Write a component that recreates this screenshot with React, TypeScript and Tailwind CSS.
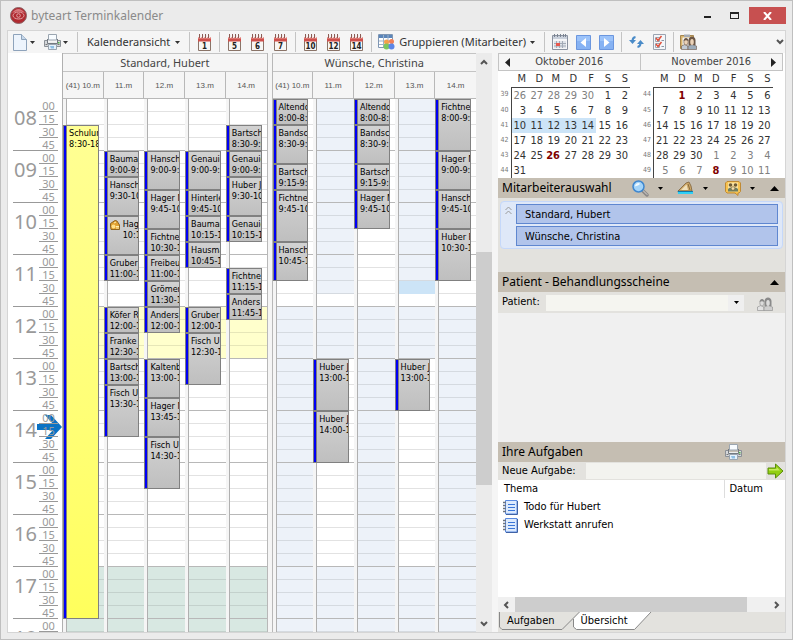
import React from 'react';

const UI = "font-['Noto_Sans','Open_Sans',sans-serif]";
const SMALL = "font-['DejaVu_Sans_Condensed','DejaVu_Sans',sans-serif]";

type Appointment = { name: string; time: string; from: number; to: number; tone?: 'yellow'; cash?: boolean };
type Shade = { from: number; to: number; className: string };
type Day = { label: string; shades: Shade[]; items: Appointment[] };

const SLOTS = 41;
const slot = (hour: number) => Math.round((hour - 8) * 4) + 1;

const hubert: Shade[] = [
  { from: 12, to: 13, className: 'bg-[#ffffcc] border-[#e6e6b8]' },
  { from: 17, to: 19, className: 'bg-[#d8e8e2] border-[#c3d1cc]' },
];
const BLUE = 'bg-[#edf2f9] border-[#d5dae0]';
const afternoonOff: Shade[] = [{ from: 12, to: 19, className: BLUE }];
const morningOff: Shade[] = [
  { from: 8, to: 11.75, className: BLUE },
  { from: 12, to: 13, className: BLUE },
  { from: 17, to: 19, className: BLUE },
];

const groups: { name: string; days: Day[] }[] = [
  {
    name: 'Standard, Hubert',
    days: [
      {
        label: '(41) 10.m',
        shades: hubert,
        items: [{ name: 'Schulung', time: '8:30-18:00', from: 8.5, to: 18, tone: 'yellow' }],
      },
      {
        label: '11.m',
        shades: hubert,
        items: [
          { name: 'Baumann', time: '9:00-9:30', from: 9, to: 9.5 },
          { name: 'Hansch', time: '9:30-10:15', from: 9.5, to: 10.25 },
          { name: 'Hager', time: '10:15-11:00', from: 10.25, to: 11, cash: true },
          { name: 'Gruber', time: '11:00-11:30', from: 11, to: 11.5 },
          { name: 'Köfer R', time: '12:00-12:30', from: 12, to: 12.5 },
          { name: 'Franke', time: '12:30-13:00', from: 12.5, to: 13 },
          { name: 'Bartsch', time: '13:00-13:30', from: 13, to: 13.5 },
          { name: 'Fisch U', time: '13:30-14:30', from: 13.5, to: 14.5 },
        ],
      },
      {
        label: '12.m',
        shades: hubert,
        items: [
          { name: 'Hansch', time: '9:00-9:45', from: 9, to: 9.75 },
          { name: 'Hager M', time: '9:45-10:30', from: 9.75, to: 10.5 },
          { name: 'Fichtner', time: '10:30-11:00', from: 10.5, to: 11 },
          { name: 'Freibeuter', time: '11:00-11:30', from: 11, to: 11.5 },
          { name: 'Grömer', time: '11:30-12:00', from: 11.5, to: 12 },
          { name: 'Anders', time: '12:00-12:30', from: 12, to: 12.5 },
          { name: 'Kaltenb', time: '13:00-13:45', from: 13, to: 13.75 },
          { name: 'Hager M', time: '13:45-14:30', from: 13.75, to: 14.5 },
          { name: 'Fisch U', time: '14:30-15:30', from: 14.5, to: 15.5 },
        ],
      },
      {
        label: '13.m',
        shades: hubert,
        items: [
          { name: 'Genauig', time: '9:00-9:45', from: 9, to: 9.75 },
          { name: 'Hinterle', time: '9:45-10:15', from: 9.75, to: 10.25 },
          { name: 'Baumann', time: '10:15-10:45', from: 10.25, to: 10.75 },
          { name: 'Hausmann', time: '10:45-11:15', from: 10.75, to: 11.25 },
          { name: 'Gruber', time: '12:00-12:30', from: 12, to: 12.5 },
          { name: 'Fisch U', time: '12:30-13:30', from: 12.5, to: 13.5 },
        ],
      },
      {
        label: '14.m',
        shades: hubert,
        items: [
          { name: 'Bartsch', time: '8:30-9:00', from: 8.5, to: 9 },
          { name: 'Genauig', time: '9:00-9:30', from: 9, to: 9.5 },
          { name: 'Huber J', time: '9:30-10:15', from: 9.5, to: 10.25 },
          { name: 'Genauig', time: '10:15-10:45', from: 10.25, to: 10.75 },
          { name: 'Fichtner', time: '11:15-11:45', from: 11.25, to: 11.75 },
          { name: 'Anders', time: '11:45-12:15', from: 11.75, to: 12.25 },
        ],
      },
    ],
  },
  {
    name: 'Wünsche, Christina',
    days: [
      {
        label: '(41) 10.m',
        shades: afternoonOff,
        items: [
          { name: 'Altendorf', time: '8:00-8:30', from: 8, to: 8.5 },
          { name: 'Bandsch', time: '8:30-9:15', from: 8.5, to: 9.25 },
          { name: 'Bartsch', time: '9:15-9:45', from: 9.25, to: 9.75 },
          { name: 'Fichtner', time: '9:45-10:45', from: 9.75, to: 10.75 },
          { name: 'Hansch', time: '10:45-11:30', from: 10.75, to: 11.5 },
        ],
      },
      {
        label: '11.m',
        shades: morningOff,
        items: [
          { name: 'Huber J', time: '13:00-14:00', from: 13, to: 14 },
          { name: 'Huber J', time: '14:00-15:00', from: 14, to: 15 },
        ],
      },
      {
        label: '12.m',
        shades: afternoonOff,
        items: [
          { name: 'Altendorf', time: '8:00-8:30', from: 8, to: 8.5 },
          { name: 'Bandsch', time: '8:30-9:15', from: 8.5, to: 9.25 },
          { name: 'Bartsch', time: '9:15-9:45', from: 9.25, to: 9.75 },
          { name: 'Hager M', time: '9:45-10:30', from: 9.75, to: 10.5 },
        ],
      },
      {
        label: '13.m',
        shades: [{ from: 11.5, to: 11.75, className: 'bg-[#cce4f7] border-[#cce4f7]' }, ...morningOff],
        items: [{ name: 'Huber J', time: '13:00-14:00', from: 13, to: 14 }],
      },
      {
        label: '14.m',
        shades: afternoonOff,
        items: [
          { name: 'Fichtner', time: '8:00-9:00', from: 8, to: 9 },
          { name: 'Hager M', time: '9:00-9:45', from: 9, to: 9.75 },
          { name: 'Hansch', time: '9:45-10:30', from: 9.75, to: 10.5 },
          { name: 'Huber E', time: '10:30-11:30', from: 10.5, to: 11.5 },
        ],
      },
    ],
  },
];

/* ---------- icons ---------- */

function Logo() {
  return (
    <svg width="17" height="17" viewBox="0 0 17 17">
      <circle cx="8.5" cy="8.5" r="8" fill="#b02a30" stroke="#8d6668" />
      <path d="M2 6Q8.5 -2 15 6Q8.5 2.500 2 6Z" fill="#d9777b" />
      <ellipse cx="8.5" cy="8.5" rx="5.5" ry="3.5" fill="none" stroke="#e3a5a7" />
      <circle cx="8.5" cy="8.5" r="1.8" fill="none" stroke="#e3a5a7" />
    </svg>
  );
}

function PageIcon() {
  return (
    <svg width="14" height="17" viewBox="0 0 14 17">
      <path d="M.5 .5H8.5L13.5 5.5V16.5H.5Z" fill="#edf4fc" stroke="#8ea3bb" />
      <path d="M8.5 .5V5.5H13.5" fill="#c7d8ea" stroke="#8ea3bb" />
    </svg>
  );
}

function PrinterIcon() {
  return (
    <svg width="17" height="16" viewBox="0 0 17 16">
      <path d="M4.5 .5H12.5V6H4.5Z" fill="#f8fcff" stroke="#9aa5b0" />
      <path d="M.5 6.5H3.500V8.500H13.500V6.500H16.500V12.500H.5Z" fill="#d5d8db" stroke="#8b9096" />
      <path d="M3.5 5V9.500H13.500V5" fill="none" stroke="#747a81" />
      <path d="M4 8H13V9H4Z" fill="#eceeef" />
      <path d="M4.5 10.5H12.5V15.5H4.5Z" fill="#e4f1fb" stroke="#9aa5b0" />
      <path d="M6 12H10V14.500H7Z" fill="#8fc0e6" />
      <path d="M14 8H15.500V9.500H14Z" fill="#52b848" />
      <path d="M1.500 10.500H3.500M13.500 10.500H15.500" stroke="#777" />
    </svg>
  );
}

function DayIcon({ n }: { n: string }) {
  return (
    <svg width="15" height="17" viewBox="0 0 15 17">
      <path d="M1.5 3.5H13.5V16.5H1.5Z" fill="#f8f6f4" stroke="#8a7468" />
      <path d="M1 3H14V7.500H1Z" fill="#cf4f4b" />
      <path d="M1 3H14V4.500H1Z" fill="#eaa19b" />
      <path d="M2.500 0V4M5.500 0V4M8.500 0V4M11.500 0V4" stroke="#8b5b55" />
      <path d="M3.500 1V4M6.500 1V4M9.500 1V4M12.500 1V4" stroke="#f5e9e7" />
      <text
        x="7.5"
        y="15"
        textAnchor="middle"
        fill="#222"
        className="font-['DejaVu_Sans_Condensed','DejaVu_Sans',sans-serif] text-[8px] font-bold"
      >
        {n}
      </text>
    </svg>
  );
}

function GroupIcon() {
  return (
    <svg width="17" height="16" viewBox="0 0 17 16">
      <path d="M.5 .5H14.5V13.5H.5Z" fill="#fff" stroke="#7f96b3" />
      <path d="M1 1H14V4H1Z" fill="#5c86ba" />
      <path d="M1 7H14M1 10.5H14M5.5 1V13M10 1V13" stroke="#9db2ca" />
      <circle cx="8.5" cy="8" r="2.5" fill="#f4a04a" />
      <circle cx="13.5" cy="7.5" r="2.5" fill="#f08058" />
      <circle cx="8.5" cy="12.500" r="3" fill="#7cc75e" />
      <circle cx="13.5" cy="12.500" r="3" fill="#5c86e6" />
    </svg>
  );
}

function MonthIcon() {
  return (
    <svg width="16" height="16" viewBox="0 0 16 16">
      <path d="M.5 1.5H15.500V15.5H.5Z" fill="#f5f6f8" stroke="#8a92a0" />
      <path d="M1 2H15V5H1Z" fill="#c9d0db" />
      <path d="M2.5 0V3M5.500 0V3M8.500 0V3M11.500 0V3M13.500 0V3" stroke="#7a8390" />
      <path d="M2 7H14V14H2Z" fill="#dfe3e9" />
      <path d="M2 9.500H14M2 12H14M4.500 7V14M7.500 7V14M10.500 7V14" stroke="#a3abb7" />
      <path d="M4 9H8V12H4Z" fill="#e8584e" />
    </svg>
  );
}

function StepIcon({ dir }: { dir: 'left' | 'right' }) {
  return (
    <svg width="15" height="15" viewBox="0 0 15 15">
      <path d="M.5 .5H14.5V14.5H.5Z" fill="#86b2f3" stroke="#6b96de" />
      <path d="M1 1H14V6H1Z" fill="#9cc3fa" />
      <path d={dir === 'left' ? 'M10 3V12L4.500 7.500Z' : 'M5 3V12L10.500 7.500Z'} fill="#fff" />
    </svg>
  );
}

function RefreshIcon() {
  return (
    <svg width="15" height="14" viewBox="0 0 15 14" fill="none" stroke="#4a8bc8" strokeWidth="2">
      <path d="M6.5 2Q3.500 2.500 3.500 6" />
      <path d="M0 5H7L3.5 9Z" fill="#4a8bc8" stroke="none" />
      <path d="M8.500 12Q11.500 11.500 11.500 8" />
      <path d="M8 9H15L11.5 5Z" fill="#4a8bc8" stroke="none" />
    </svg>
  );
}

function ChecklistIcon() {
  return (
    <svg width="13" height="16" viewBox="0 0 13 16">
      <path d="M.5 .5H12.5V15.5H.5Z" fill="#f4f6f9" stroke="#9ba4b1" />
      <path d="M2.5 3.5H6.5V7.5H2.5ZM2.5 9.5H6.5V13.5H2.5Z" fill="#fff" stroke="#9aa7b5" />
      <path d="M3 4L5 6.500L8.500 2M3 10L5 12.500L8.500 8" fill="none" stroke="#e0503c" strokeWidth="1.500" />
      <path d="M8.500 6.500H11M8.500 12.500H11" stroke="#8b95a3" />
    </svg>
  );
}

function PatientIcon({ muted = false }: { muted?: boolean }) {
  const hair = muted ? '#8a8a8a' : '#6b5646';
  const skin = muted ? '#dcdcdc' : '#ecd3b8';
  return (
    <svg width="17" height="16" viewBox="0 0 17 16">
      {!muted && (
        <>
          <path d="M.5 1.500H13.500V14.500H.5Z" fill="#d9b56e" stroke="#a58650" />
          <path d="M2.500 3.500H11.500V13H2.500Z" fill="#f2f5f8" />
          <path d="M4 .5H10V3H4Z" fill="#a5abb3" />
        </>
      )}
      <path d="M1.500 15.500V12Q5 9 8 12V15.500Z" fill={muted ? '#e2e2e2' : '#c2cad4'} stroke={hair} strokeWidth=".6" />
      <path d="M8 15.500V12Q12 9 16.500 12V15.500Z" fill={muted ? '#cfcfcf' : '#9dacba'} stroke={hair} strokeWidth=".6" />
      <path d="M8.500 11V6Q9 2.500 12 2.500T15.500 6V11Z" fill={hair} />
      <ellipse cx="12" cy="8" rx="1.800" ry="3" fill={skin} />
      <ellipse cx="6" cy="8" rx="2.200" ry="3" fill={skin} stroke={hair} strokeWidth=".6" />
      <path d="M3.500 7Q4 4 6 4T8.500 7Q6 5.500 3.500 7Z" fill={hair} />
    </svg>
  );
}

function SearchIcon() {
  return (
    <svg width="17" height="17" viewBox="0 0 17 17">
      <path d="M10.5 10.500L15 15" stroke="#8d8a88" strokeWidth="3.500" strokeLinecap="round" />
      <path d="M10.500 10L15 14.500" stroke="#d8d6d4" strokeLinecap="round" />
      <circle cx="6.5" cy="6.5" r="5.500" fill="#a3d4fa" stroke="#3f87cf" strokeWidth="1.500" />
      <path d="M3 6.500Q3 3 7 3Q9 4 6 5.500Q4 6 3 6.500Z" fill="#f2faff" />
    </svg>
  );
}

function HatIcon() {
  return (
    <svg width="17" height="14" viewBox="0 0 17 14">
      <path d="M1 10L5 6L9 2L12 1L14 5L15 10Z" fill="#cda868" stroke="#7c6038" strokeWidth=".8" />
      <path d="M4 9L9.500 3.500L11 9Z" fill="#f0e0ba" />
      <path d="M11 3L13 9" stroke="#8a6b3c" />
      <path d="M.5 10H16L15.500 13H1.500Z" fill="#1176a8" />
      <path d="M1 12H16" stroke="#2fd0f5" strokeWidth="2" />
    </svg>
  );
}

function TeamIcon() {
  return (
    <svg width="16" height="15" viewBox="0 0 16 15">
      <path d="M2 .5H14L15.5 2V10.5L14 12H13V14.5L10 12H2L.5 10.5V2Z" fill="#f7c350" stroke="#c08a34" />
      <path d="M3 1.500H13V10.500H3Z" fill="#fae2a0" />
      <circle cx="5.5" cy="4" r="1.800" fill="#6e5a35" />
      <circle cx="10.5" cy="4" r="1.800" fill="#6e5a35" />
      <path d="M3 10.5V8Q5.500 5 8 8Q10.500 5 13 8V10.500Z" fill="#6e7f62" />
      <circle cx="8" cy="7.500" r="1.800" fill="#f3dfae" stroke="#6e5a35" strokeWidth=".6" />
    </svg>
  );
}

function CashIcon() {
  return (
    <svg width="10" height="10" viewBox="0 0 10 10" className="mt-px shrink-0">
      <path d="M.5 3.500L5 .5L7 1L9.500 5V9.500H1L.5 6Z" fill="#e0a030" stroke="#8d6420" />
      <circle cx="3.5" cy="6.500" r="2" fill="#ffe08a" />
      <path d="M6 6.500H9M6 8H9" stroke="#fff0b0" />
      <path d="M4 3L6 2" stroke="#fff0b0" />
    </svg>
  );
}

function NotebookIcon() {
  return (
    <svg width="15" height="15" viewBox="0 0 15 15">
      <path d="M2.5 .5H14V14H2.5Z" fill="#dceafd" stroke="#5a8ae0" />
      <path d="M14.500 1V14.500H3" fill="none" stroke="#3f62a5" />
      <path d="M5 4.5H12M5 7.5H12M5 10.5H12" stroke="#3a76d8" />
      <path d="M0 2.5H3M0 5.5H3M0 8.5H3M0 11.5H3" stroke="#6b7482" strokeWidth="1.500" />
    </svg>
  );
}

function GoIcon() {
  return (
    <svg width="17" height="16" viewBox="0 0 17 16">
      <path d="M1 5H8.5V1L16 8L8.5 15V11H1Z" fill="#93cf12" stroke="#5a8d0a" />
      <path d="M2 6H9.5V4L13 7.5H2Z" fill="#c5ec5c" />
    </svg>
  );
}

function Down({ className = 'text-[#333]' }: { className?: string }) {
  return (
    <svg width="5" height="3" viewBox="0 0 5 3" className={`shrink-0 ${className}`}>
      <path d="M0 0H5L2.5 3Z" fill="currentColor" />
    </svg>
  );
}

function Chevron({ d, width, height }: { d: string; width: number; height: number }) {
  return (
    <svg width={width} height={height} viewBox={`0 0 ${width} ${height}`} fill="none" stroke="#555" strokeWidth="2">
      <path d={d} />
    </svg>
  );
}

/* ---------- toolbar ---------- */

function Divider() {
  return <span className="h-5 w-px shrink-0 bg-[#c4c4c4]" />;
}

function Tool({ label, children, className = '' }: { label: string; children: React.ReactNode; className?: string }) {
  return (
    <button type="button" aria-label={label} className={`flex shrink-0 items-center ${className}`}>
      {children}
    </button>
  );
}

function Toolbar() {
  return (
    <div className="flex h-[22px] items-center bg-[#f5f5f5] pl-[5px] text-[11px] text-[#333]">
      <Tool label="Neu" className="gap-[3px]">
        <PageIcon />
        <Down />
      </Tool>
      <Tool label="Drucken" className="mx-[9px] gap-[2px]">
        <PrinterIcon />
        <Down />
      </Tool>
      <Divider />
      <button type="button" className="mx-[9px] flex shrink-0 items-center gap-[5px] whitespace-nowrap">
        Kalenderansicht <Down />
      </button>
      <Divider />
      <Tool label="Ein Tag" className="mx-[7px]"><DayIcon n="1" /></Tool>
      <Divider />
      <div className="mx-[7px] flex gap-2">
        <Tool label="5 Tage"><DayIcon n="5" /></Tool>
        <Tool label="6 Tage"><DayIcon n="6" /></Tool>
        <Tool label="7 Tage"><DayIcon n="7" /></Tool>
      </div>
      <Divider />
      <div className="mx-[7px] flex gap-2">
        <Tool label="10 Tage"><DayIcon n="10" /></Tool>
        <Tool label="12 Tage"><DayIcon n="12" /></Tool>
        <Tool label="14 Tage"><DayIcon n="14" /></Tool>
      </div>
      <Divider />
      <button type="button" className="ml-[6px] mr-[9px] flex shrink-0 items-center gap-1 whitespace-nowrap">
        <GroupIcon /> Gruppieren (Mitarbeiter) <Down />
      </button>
      <Divider />
      <div className="mx-[7px] flex gap-2">
        <Tool label="Heute"><MonthIcon /></Tool>
        <Tool label="Zurück"><StepIcon dir="left" /></Tool>
        <Tool label="Vor"><StepIcon dir="right" /></Tool>
      </div>
      <Divider />
      <div className="mx-[7px] flex gap-[9px]">
        <Tool label="Aktualisieren"><RefreshIcon /></Tool>
        <Tool label="Aufgabenliste"><ChecklistIcon /></Tool>
      </div>
      <Divider />
      <Tool label="Patient" className="ml-[6px]"><PatientIcon /></Tool>
      <Tool label="Mehr" className="ml-auto mr-px"><Chevron d="M1 1L4 4L7 1" width={8} height={6} /></Tool>
    </div>
  );
}

/* ---------- schedule ---------- */

function TimeScale() {
  const hours = Array.from({ length: 11 }, (_, i) => String(i + 8).padStart(2, '0'));
  return (
    <div className="relative w-[55px] shrink-0 border-r border-[#b0b0b0] pl-[5px] text-[#999]">
      {hours.map((h) => (
        <div key={h} className="mr-1 flex h-[52px] border-b border-[#999] last:border-0">
          <div className="w-[26px] pr-[2px] pt-[5px] text-right text-[20px] leading-[28px]">{h}</div>
          <div className="flex-1">
            {['00', '15', '30', '45'].map((m) => (
              <div
                key={m}
                className="h-[13px] border-b border-[#999] text-center text-[11px] leading-[14px] last:border-0"
              >
                {m}
              </div>
            ))}
          </div>
        </div>
      ))}
    </div>
  );
}

function Appt({ item }: { item: Appointment }) {
  const fill = item.tone === 'yellow' ? 'bg-linear-to-b from-[#ffff94] to-[#ffff5c]' : 'bg-linear-to-b from-[#d2d2d2] to-[#bfbfbf]';
  return (
    <div
      className="z-10 col-start-1 mr-[5px] flex min-w-0 overflow-hidden border border-[#808080]"
      style={{ gridRow: `${slot(item.from)} / ${slot(item.to)}` }}
    >
      <div className="w-[3px] shrink-0 border-r border-[#808080] bg-[#0000f5]" />
      <div className={`flex min-w-0 flex-1 gap-[3px] overflow-hidden pl-[2px] pt-[2px] text-[9px] leading-[11px] text-black ${SMALL} ${fill}`}>
        {item.cash && <CashIcon />}
        <div className="whitespace-nowrap">
          {item.name}
          <br />
          {item.time}
        </div>
      </div>
    </div>
  );
}

function DayColumn({ day }: { day: Day }) {
  return (
    <div className="grid min-w-0 auto-rows-[13px] grid-cols-[minmax(0,1fr)]">
      {Array.from({ length: SLOTS }, (_, i) => {
        const hour = 8 + i / 4;
        const shade = day.shades.find((s) => hour >= s.from && hour < s.to);
        const line = i % 4 === 3 ? 'border-b-[#b8b8b8]' : '';
        return (
          <div key={i} className="col-start-1 flex" style={{ gridRow: i + 1 }}>
            <div className="w-1 shrink-0 border-r border-[#b0b0b0] bg-[#f5f5f5]" />
            <div className={`flex-1 border-b ${shade ? shade.className : 'border-[#e2e2e2] bg-white'} ${line}`} />
          </div>
        );
      })}
      {day.items.map((item) => (
        <Appt key={item.from} item={item} />
      ))}
    </div>
  );
}

function Schedule() {
  return (
    <div className="flex min-w-0 flex-1 flex-col bg-white">
      <div className="flex">
        <div className="w-[55px] shrink-0 border-r border-[#b0b0b0]" />
        <div className="flex min-w-0 flex-1 gap-1 bg-[#f5f5f5]">
          {groups.map((g) => (
            <div key={g.name} className="min-w-0 flex-1 border-r border-[#b8b8b8] text-[#444] not-first:border-l last:border-r-0">
              <div className="h-[19px] border-y border-[#c4c4c4] text-center text-[11px] leading-[18px]">{g.name}</div>
              <div className="grid grid-cols-5 divide-x divide-[#b8b8b8] border-b border-[#b8b8b8]">
                {g.days.map((d) => (
                  <div
                    key={d.label}
                    className="h-[26px] whitespace-nowrap text-center font-['Liberation_Sans',sans-serif] text-[8px] leading-[27px] text-[#555]"
                  >
                    {d.label}
                  </div>
                ))}
              </div>
            </div>
          ))}
        </div>
      </div>
      <div className="relative flex h-[533px] overflow-hidden">
        {/* current time marker, behind the minute labels */}
        <svg width="25" height="24" viewBox="0 0 25 24" className="absolute left-[29px] top-[316px]">
          <path d="M0 9H16L8 0H14L25 12L14 24H8L16 15H0Z" fill="#0a72c4" />
        </svg>
        <TimeScale />
        <div className="flex min-w-0 flex-1 gap-1 bg-[#f5f5f5]">
          {groups.map((g) => (
            <div key={g.name} className="grid min-w-0 flex-1 grid-cols-5 border-r border-[#b8b8b8] not-first:border-l last:border-r-0">
              {g.days.map((d) => (
                <DayColumn key={d.label} day={d} />
              ))}
            </div>
          ))}
        </div>
      </div>
    </div>
  );
}

function ScheduleScrollbar() {
  return (
    <div className="mr-[6px] flex w-4 shrink-0 flex-col items-center bg-[#ebebeb]">
      <div className="flex h-[17px] items-center">
        <Chevron d="M1 5L4 2L7 5" width={8} height={6} />
      </div>
      <div className="flex w-full flex-1 flex-col">
        <div className="flex-[182]" />
        <div className="flex-[234] bg-[#cdcdcd]" />
        <div className="flex-[130]" />
      </div>
      <div className="flex h-[17px] items-center">
        <Chevron d="M1 1L4 4L7 1" width={8} height={6} />
      </div>
    </div>
  );
}

/* ---------- side panel ---------- */

type MonthData = {
  title: string;
  weeks: { no: number; days: string[] }[];
  dim: (w: number, d: number) => boolean;
  bold: string[];
  selected?: number;
};

const months: MonthData[] = [
  {
    title: 'Oktober 2016',
    weeks: [
      { no: 39, days: ['26', '27', '28', '29', '30', '1', '2'] },
      { no: 40, days: ['3', '4', '5', '6', '7', '8', '9'] },
      { no: 41, days: ['10', '11', '12', '13', '14', '15', '16'] },
      { no: 42, days: ['17', '18', '19', '20', '21', '22', '23'] },
      { no: 43, days: ['24', '25', '26', '27', '28', '29', '30'] },
      { no: 44, days: ['31', '', '', '', '', '', ''] },
    ],
    dim: (w, d) => w === 0 && d < 5,
    bold: ['4-2'],
    selected: 2,
  },
  {
    title: 'November 2016',
    weeks: [
      { no: 44, days: ['', '1', '2', '3', '4', '5', '6'] },
      { no: 45, days: ['7', '8', '9', '10', '11', '12', '13'] },
      { no: 46, days: ['14', '15', '16', '17', '18', '19', '20'] },
      { no: 47, days: ['21', '22', '23', '24', '25', '26', '27'] },
      { no: 48, days: ['28', '29', '30', '1', '2', '3', '4'] },
      { no: 49, days: ['5', '6', '7', '8', '9', '10', '11'] },
    ],
    dim: (w, d) => w === 5 || (w === 4 && d > 2),
    bold: ['0-1', '5-3'],
  },
];

function Month({ month, side }: { month: MonthData; side: 'left' | 'right' }) {
  return (
    <div className="min-w-0 flex-1">
      <div
        className={`flex h-[18px] items-center border border-[#c4c4c4] bg-[#f5f5f5] px-[6px] text-[#444] ${side === 'right' ? 'border-l-0' : ''}`}
      >
        <button type="button" aria-label="Voriger Monat" className={side === 'left' ? '' : 'invisible'}>
          <svg width="5" height="9" viewBox="0 0 5 9"><path d="M5 0V9L0 4.5Z" fill="#222" /></svg>
        </button>
        <span className="flex-1 text-center">{month.title}</span>
        <button type="button" aria-label="Nächster Monat" className={side === 'right' ? '' : 'invisible'}>
          <svg width="5" height="9" viewBox="0 0 5 9"><path d="M0 0V9L5 4.5Z" fill="#222" /></svg>
        </button>
      </div>
      <table className="mt-px table-fixed border-collapse text-right text-[#333]">
        <thead>
          <tr className="h-[15px]">
            <th className="w-[13px]" />
            {['M', 'D', 'M', 'D', 'F', 'S', 'S'].map((d, i) => (
              <th key={i} className="w-[17px] border-b border-[#444] p-0 pr-[2px] font-normal leading-[14px]">{d}</th>
            ))}
          </tr>
        </thead>
        <tbody>
          {month.weeks.map((week, w) => (
            <tr key={w} className="h-[15px]">
              <td className="border-r border-[#444] p-0 pr-[2px] text-[7px] leading-[15px] text-[#777]">{week.no}</td>
              {week.days.map((d, i) => {
                const bold = month.bold.includes(`${w}-${i}`);
                const color = bold ? 'font-bold text-[#800000]' : month.dim(w, i) ? 'text-[#808080]' : '';
                const selected = month.selected === w && i < 5 ? 'bg-[#cce4f7]' : '';
                return (
                  <td key={i} className={`p-0 pr-[2px] leading-[15px] ${color} ${selected}`}>{d}</td>
                );
              })}
            </tr>
          ))}
        </tbody>
      </table>
    </div>
  );
}

function SectionBar({ title, children }: { title: string; children?: React.ReactNode }) {
  return (
    <div className="flex h-5 shrink-0 items-center bg-[#c5beb2] pl-1 pr-[6px]">
      <h2 className={`flex-1 text-[12px] text-black ${UI}`}>{title}</h2>
      {children}
    </div>
  );
}

function Collapse() {
  return (
    <button type="button" aria-label="Zuklappen">
      <svg width="9" height="5" viewBox="0 0 9 5"><path d="M0 5H9L4.5 0Z" fill="#000" /></svg>
    </button>
  );
}

function SidePanel() {
  return (
    <aside className={`flex w-[287px] shrink-0 flex-col text-[11px] text-black ${SMALL}`}>
      <div className="flex h-[125px] bg-white pr-[2px]">
        {months.map((m, i) => (
          <Month key={m.title} month={m} side={i === 0 ? 'left' : 'right'} />
        ))}
      </div>

      <SectionBar title="Mitarbeiterauswahl">
        <div className="mr-[15px] flex items-center">
          <Tool label="Suchen" className="mr-[14px] gap-[9px]"><SearchIcon /><Down className="text-black" /></Tool>
          <Tool label="Abwesenheit" className="mr-[17px] gap-[9px]"><HatIcon /><Down className="text-black" /></Tool>
          <Tool label="Team" className="gap-[9px]"><TeamIcon /><Down className="text-black" /></Tool>
        </div>
        <Collapse />
      </SectionBar>
      <div className="h-[74px] bg-[#e3e2de] px-[2px] pt-[3px]">
        <div className="flex rounded border border-[#c5d8fa] bg-[#dfe8f8] py-[2px] pr-1">
          <svg width="7" height="9" viewBox="0 0 7 9" fill="none" stroke="#999" className="mx-1 mt-[2px]">
            <path d="M.5 4L3.5 1L6.5 4M.5 8L3.5 5L6.5 8" />
          </svg>
          <ul className="flex flex-1 flex-col gap-[2px]">
            {groups.map((g) => (
              <li key={g.name} className="h-5 border border-[#5f87d0] bg-[#b1c4eb] pl-2 leading-[20px]">{g.name}</li>
            ))}
          </ul>
        </div>
      </div>

      <SectionBar title="Patient - Behandlungsscheine">
        <Collapse />
      </SectionBar>
      <div className="flex h-[21px] items-center bg-[#e3e2de] pl-1 pr-3">
        <label htmlFor="patient" className="w-[44px]">Patient:</label>
        <div className="flex h-4 flex-1 items-center bg-[#f5f5f0]">
          <input id="patient" className="h-full min-w-0 flex-1 bg-transparent px-1 outline-none" />
          <button type="button" aria-label="Patient wählen" className="flex h-full w-4 items-center justify-center bg-[#efefef]">
            <Down className="text-black" />
          </button>
        </div>
        <Tool label="Patient öffnen" className="ml-3"><PatientIcon muted /></Tool>
      </div>
      <div className="min-h-[60px] flex-1 bg-[#f0f0f0]" />

      <SectionBar title="Ihre Aufgaben">
        <Tool label="Aufgaben drucken" className="mr-[37px]"><PrinterIcon /></Tool>
      </SectionBar>
      <div className="flex h-[18px] items-center bg-[#e3e2de] pl-1">
        <label htmlFor="task" className="w-[84px]">Neue Aufgabe:</label>
        <input id="task" className="h-4 min-w-0 flex-1 bg-[#f3f3ef] px-1 outline-none" />
        <Tool label="Hinzufügen" className="ml-px mr-px"><GoIcon /></Tool>
      </div>
      <div className="h-[117px] bg-white">
        <table className="w-full table-fixed text-left">
          <thead>
            <tr className="h-[18px]">
              <th className="p-0 pl-[6px] font-normal">Thema</th>
              <th className="w-[61px] border-l border-[#ddd] p-0 pl-[5px] font-normal">Datum</th>
            </tr>
          </thead>
          <tbody>
            {['Todo für Hubert', 'Werkstatt anrufen'].map((task) => (
              <tr key={task} className="h-[18px]">
                <td className="p-0 pl-[5px]">
                  <span className="flex items-center gap-[6px]"><NotebookIcon /> {task}</span>
                </td>
                <td />
              </tr>
            ))}
          </tbody>
        </table>
      </div>
      <div className="flex h-[15px] items-center bg-[#f0f0f0] px-[5px]">
        <Chevron d="M5 1L2 4L5 7" width={7} height={8} />
        <div className="ml-[5px] mr-[26px] h-full flex-1 bg-[#cdcdcd]" />
        <Chevron d="M2 1L5 4L2 7" width={7} height={8} />
      </div>
      <div className="relative flex h-5 items-start bg-[#e3e2de]">
        <svg width="156" height="18" viewBox="0 0 156 18" className="absolute left-0 top-0">
          <path d="M81.500 0L75.500 7V15L78.500 17.500H136.500L153 0Z" fill="#fff" />
          <path d="M1.5 0V15L4 17.5H64L81.5 0M75.5 7V15L78.5 17.5H136.5L153 0" fill="none" stroke="#888" />
        </svg>
        <button type="button" className="relative ml-[9px] leading-[18px]">Aufgaben</button>
        <button type="button" className="relative ml-[26px] leading-[18px]">Übersicht</button>
      </div>
    </aside>
  );
}

export default function App() {
  return (
    <div className={`flex min-h-screen flex-col border border-[#bfbfbf] bg-[#ebebeb] px-[6px] pb-[6px] ${UI}`}>
      <header className="flex h-[29px] shrink-0 items-center pl-[3px]">
        <Logo />
        <h1 className="ml-1 flex-1 text-[12px] text-[#8a8a8a]">byteart Terminkalender</h1>
        <button type="button" aria-label="Minimieren" className="mr-[19px] mt-[3px] h-[2px] w-[7px] bg-[#222]" />
        <button type="button" aria-label="Maximieren" className="mr-[10px] h-[7px] w-[9px] border border-t-2 border-[#222]" />
        <button type="button" aria-label="Schließen" className="flex h-[17px] w-[37px] items-center justify-center bg-[#c75050]">
          <svg width="9" height="8" viewBox="0 0 9 8"><path d="M1 0L8 8M8 0L1 8" stroke="#fff" strokeWidth="2" /></svg>
        </button>
      </header>
      <main className="flex flex-1 flex-col border border-[#d5d5d5] bg-[#f5f5f5]">
        <Toolbar />
        <div className="flex flex-1">
          <Schedule />
          <ScheduleScrollbar />
          <SidePanel />
        </div>
      </main>
    </div>
  );
}
